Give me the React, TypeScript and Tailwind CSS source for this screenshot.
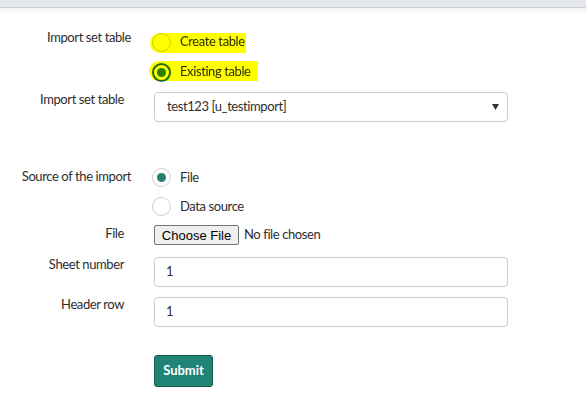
import type { ReactNode } from 'react';

const font = { fontFamily: 'Lato, "Open Sans", sans-serif' };

function Radio({ checked, ring }: { checked?: boolean; ring?: boolean }) {
  return (
    <span
      className={`flex h-[19px] w-[19px] shrink-0 items-center justify-center rounded-full bg-white ${
        ring ? 'border-2 border-[#1d6e62]' : 'border border-[#cfcfcf]'
      }`}
    >
      {checked && <span className="h-[9px] w-[9px] rounded-full bg-[#278073]" />}
    </span>
  );
}

function Highlight({ className }: { className: string }) {
  return <span className={`pointer-events-none absolute bg-[#ffff00] mix-blend-multiply ${className}`} />;
}

function Row({ label, labelClass = 'pr-[7px] pt-[2px]', children, className = '' }: {
  label?: string;
  labelClass?: string;
  children: ReactNode;
  className?: string;
}) {
  return (
    <div className={`flex ${className}`}>
      <div className={`w-[131px] shrink-0 text-right leading-5 text-[#2e2e2e] ${labelClass}`}>{label}</div>
      <div className="ml-[23px] w-[354px]">{children}</div>
    </div>
  );
}

export default function App() {
  return (
    <div className="relative h-[410px] w-[586px] overflow-hidden bg-white text-[13px] tracking-[-0.4px]" style={font}>
      <div className="h-[8px] border-b border-[#c9cdd1] bg-[#e4e7ea]" />
      <div className="h-[6px] bg-gradient-to-b from-[#f1f2f3] to-white" />

      {/* Import set table: create / existing */}
      <Row label="Import set table" labelClass="pt-0" className="mt-[13px]">
        <div className="relative isolate -ml-[2px]">
          <div className="flex h-[30px] items-center gap-[9px]">
            <Radio />
            <span className="text-[#2e2e2e]">Create table</span>
          </div>
          <div className="flex h-[30px] items-center gap-[9px]">
            <Radio checked ring />
            <span className="text-[#2e2e2e]">Existing table</span>
          </div>
          <Highlight className="left-[-2px] top-[6px] h-[20px] w-[96px] rounded-l-full rounded-r-[3px]" />
          <Highlight className="left-[-3px] top-[34px] h-[20px] w-[109px] rounded-l-full rounded-r-[2px]" />
        </div>
      </Row>

      <Row label="Import set table">
        <div className="mt-[5px] flex h-[30px] items-center justify-between rounded-[4px] border border-[#cccccc] pl-[12px] pr-[8px] text-[#2e2e2e]">
          <span>test123 [u_testimport]</span>
          <svg width="7" height="6" viewBox="0 0 7 6">
            <path d="M0 0h7L3.5 6z" fill="#333" />
          </svg>
        </div>
      </Row>

      {/* Source of the import */}
      <Row label="Source of the import" labelClass="pt-[3px]" className="mt-[41px]">
        <div className="-ml-[2px]">
          <div className="flex h-[29px] items-center gap-[9px]">
            <Radio checked />
            <span className="text-[#2e2e2e]">File</span>
          </div>
          <div className="flex h-[29px] items-center gap-[9px]">
            <Radio />
            <span className="text-[#2e2e2e]">Data source</span>
          </div>
        </div>
      </Row>

      <Row label="File">
        <div className="mt-[4px] flex items-center gap-[5px]">
          <button
            className="h-[20px] w-[85px] rounded-[2px] border border-[#767676] bg-[#efefef] text-[13px] tracking-normal text-black"
            style={{ fontFamily: '"Liberation Sans", Arial, sans-serif' }}
          >
            Choose File
          </button>
          <span className="text-[#2e2e2e]">No file chosen</span>
        </div>
      </Row>

      <Row label="Sheet number" className="mt-[7px]">
        <div className="mt-[5px] flex h-[30px] items-center rounded-[4px] border border-[#cccccc] pl-[11px] text-[#2e2e2e]">1</div>
      </Row>

      <Row label="Header row" className="mt-[5px]">
        <div className="mt-[5px] flex h-[30px] items-center rounded-[4px] border border-[#cccccc] pl-[11px] text-[#2e2e2e]">1</div>
      </Row>

      <Row className="mt-[28px]">
        <button className="h-[32px] w-[59px] rounded-[3px] border border-[#145c52] bg-[#1f8476] font-bold tracking-normal text-white">
          Submit
        </button>
      </Row>
    </div>
  );
}
